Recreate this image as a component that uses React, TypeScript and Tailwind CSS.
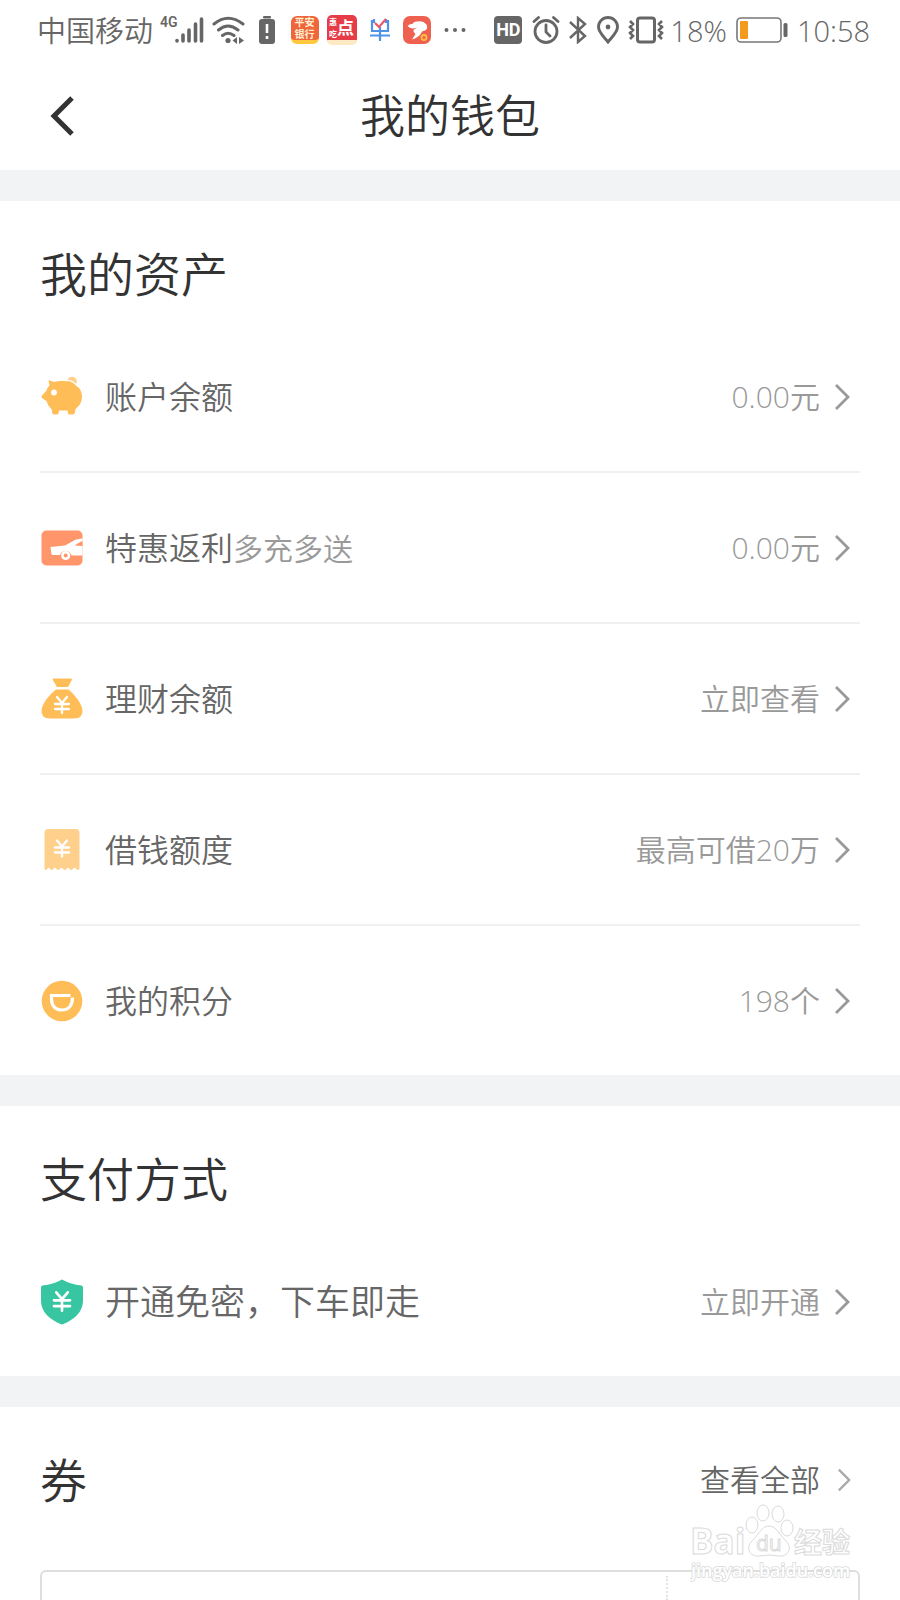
import type { ReactNode } from "react";

const fontStack =
  "font-['Open_Sans','Noto_Sans_CJK_SC',sans-serif] font-[350]";

function Yen({ x, y, s = 1, color = "#fff" }: { x: number; y: number; s?: number; color?: string }) {
  return (
    <g
      transform={`translate(${x} ${y}) scale(${s})`}
      fill="none"
      stroke={color}
      strokeWidth="2.300"
      strokeLinecap="round"
    >
      <path d="M-5 -8L0 -2L5 -8M0 -2V8M-7 -1H7M-7 4H7" />
    </g>
  );
}

function PiggyIcon() {
  return (
    <svg viewBox="0 0 44 44" className="size-11" aria-hidden="true">
      <circle cx="32" cy="6.500" r="4.800" fill="#ffd08c" />
      <path
        d="M8.500 5L14 7C16.500 6.300 19.500 6 22.500 6C34 6 42 12.500 42 21.500C42 27 39.500 31 35.500 34L35 37.500Q34.700 39.500 32.600 39.500H29.400Q28 39.500 27.800 37.500L27.500 35.500H19L18.700 37.500Q18.500 39.500 17 39.500H14Q12.500 39.500 12.200 37.500L11.600 34C9 32 7.500 29 6.500 26L2.500 23.500Q1 22 2 20.500L6.500 15.500C7 13.500 8 12 9.500 10.500Z"
        fill="#ffbd57"
      />
      <path d="M27 5Q34 6 38 12" fill="none" stroke="#fff" strokeWidth="1.200" />
      <circle cx="14" cy="17.500" r="2.900" fill="#fff" />
    </svg>
  );
}

function CarIcon() {
  return (
    <svg viewBox="0 0 44 44" className="size-11" aria-hidden="true">
      <rect x="1.500" y="4.500" width="41" height="35" rx="5" fill="#ff966b" />
      <path
        d="M10.500 21L25 19.500L35 14Q37 13 42.500 12.500V29.500H31.500A6 6 0 0 0 20 29H13Q11.500 29 11.300 27.500Z"
        fill="#fff"
      />
      <path d="M34.500 19.500L41 15.500H42.500V20Z" fill="#ff966b" />
      <circle cx="25.700" cy="29.500" r="4.600" fill="#fff" />
      <circle cx="25.700" cy="29.500" r="2" fill="#ff966b" />
    </svg>
  );
}

function MoneyBagIcon() {
  return (
    <svg viewBox="0 0 44 44" className="size-11" aria-hidden="true">
      <path d="M13.500 1.500H31Q32.500 1.500 31.800 3L28 10H17L12.800 3Q12.200 1.500 13.500 1.500Z" fill="#ffbd57" />
      <path
        d="M16 12.500H28.500C34 17 42.500 27 42.500 34Q42.500 41.500 34 41.500H10Q1.500 41.500 1.500 34C1.500 27 10 17 16 12.500Z"
        fill="#ffbd57"
      />
      <Yen x={22} y={28} />
    </svg>
  );
}

function ReceiptIcon() {
  return (
    <svg viewBox="0 0 44 44" className="size-11" aria-hidden="true">
      <path
        d="M8.500 1H35.500Q39.500 1 39.500 5V41Q37.700 43 36.300 41Q34.600 38.500 32.900 41Q31.300 43 29.700 41Q28 38.500 26.300 41Q24.700 43 23.100 41Q21.500 38.500 19.800 41Q18.200 43 16.600 41Q15 38.500 13.300 41Q11.700 43 10.100 41Q8.500 38.500 7.200 41Q6 43 4.500 41V5Q4.500 1 8.500 1Z"
        fill="#ffd08c"
      />
      <Yen x={22} y={20.5} />
    </svg>
  );
}

function PointsIcon() {
  return (
    <svg viewBox="0 0 44 44" className="size-11" aria-hidden="true">
      <circle cx="22" cy="22" r="20.300" fill="#ffbd57" />
      <path
        d="M30.500 16.500H11.500V20C11.500 27 15.500 31 22 31S32.500 26.500 32.500 18.500"
        fill="none"
        stroke="#fff"
        strokeWidth="3.200"
      />
    </svg>
  );
}

function ShieldIcon() {
  return (
    <svg viewBox="0 0 44 48" className="h-12 w-11" aria-hidden="true">
      <path
        d="M22 1.500Q31 6.500 41.500 7.500Q43 8 43 9.500V23C43 34 34 41.500 23.500 46Q22 46.800 20.500 46C10 41.500 1 34 1 23V9.500Q1 8 2.500 7.500Q13 6.500 22 1.500Z"
        fill="#38c6a2"
      />
      <Yen x={22} y={23.5} s={1.15} />
    </svg>
  );
}

function Chevron({ small = false }: { small?: boolean }) {
  return (
    <svg
      viewBox="0 0 16 28"
      className={small ? "h-6 w-4 text-[#aaa]" : "h-7 w-4 text-[#999]"}
      fill="none"
      stroke="currentColor"
      strokeWidth="2.800"
      aria-hidden="true"
    >
      <path d="M2 2L14 14L2 26" />
    </svg>
  );
}

function StatusBar() {
  return (
    <div className="flex h-[60px] items-center justify-between pr-[30px] pl-[37px] text-[29px] text-[#666]">
      <div className="flex items-center">
        <span className="leading-none">中国移动</span>
        <span className="mb-4 ml-[7px] font-['Roboto'] text-[14px] leading-none font-semibold">4G</span>
        <svg viewBox="0 0 30 28" className="-ml-1 h-7 w-[30px]" stroke="#666" strokeWidth="3.600" strokeLinecap="round" aria-hidden="true">
          <path d="M3 24.500V25M9 19V25M15 14V25M21.500 8V25M27.500 3V25" />
        </svg>
        <svg viewBox="0 0 34 28" className="ml-2 h-7 w-[34px]" fill="none" stroke="#666" strokeWidth="3" strokeLinecap="round" aria-hidden="true">
          <path d="M2 8Q16 -3.500 31 8M6.500 14Q16 6 26 14M10.500 19.500Q16 15 22 19.500" />
          <circle cx="16" cy="24.500" r="2.600" fill="#666" stroke="none" />
          <path d="M25 21V28L20.500 24.500ZM27 21V28L32 24.500Z" fill="#666" stroke="none" />
        </svg>
        <svg viewBox="0 0 16 29" className="ml-[13px] h-[29px] w-4" aria-hidden="true">
          <rect x="4" y="0" width="8" height="2.500" rx="1" fill="#666" />
          <rect x="0" y="3" width="16" height="25" rx="3" fill="#666" />
          <path d="M8 8V17M8 20V23" stroke="#fff" strokeWidth="2.600" />
        </svg>
        <span className="ml-4 flex h-7 w-7 flex-col items-center justify-center overflow-hidden rounded-[6px] border-b-4 border-[#ffc83d] bg-[#f0663c] text-[10px] leading-[12px] font-bold text-[#fff0d0]">
          <span>平安</span>
          <span>银行</span>
        </span>
        <span className="ml-2 flex h-[30px] w-[30px] items-center justify-center overflow-hidden rounded-[5px] border-b-[5px] border-[#fde9c4] bg-[#e63c48] leading-none font-bold text-white">
          <span className="flex flex-col text-[8px] leading-[12px]">
            <span>惠</span>
            <span>吃</span>
          </span>
          <span className="text-[17px]">点</span>
        </span>
        <svg viewBox="0 0 20 24" className="ml-[13px] h-6 w-5" fill="none" strokeWidth="2.200" aria-hidden="true">
          <path d="M5 3H2V13H18V3H15M10 9V23M0 17.500H20M4 1V5M16 1V5" stroke="#4d93e8" />
          <path d="M5 5L9 9L16 1" stroke="#ec5666" />
        </svg>
        <svg viewBox="0 0 28 28" className="ml-[13px] size-7" aria-hidden="true">
          <rect width="28" height="28" rx="7" fill="#ee6050" />
          <path d="M4.500 10Q7 7.500 9.500 8Q10.500 5 15 5.500Q20 4.500 23.500 8.500Q25.500 12.500 22 14.500Q19.500 14.500 18.500 16.500Q16.500 21 9 23.500L12.500 18Q10 16.500 10.500 14L14 11.500Q8 14 4.500 10Z" fill="#fff" />
          <circle cx="21" cy="21.500" r="2.500" fill="none" stroke="#ffbd3d" strokeWidth="1.800" />
        </svg>
        <svg viewBox="0 0 22 6" className="ml-[13px] h-[6px] w-[22px]" fill="#666" aria-hidden="true">
          <circle cx="2.500" cy="3" r="2" /><circle cx="11" cy="3" r="2" /><circle cx="19.500" cy="3" r="2" />
        </svg>
      </div>
      <div className="flex items-center">
        <span className="grid h-7 w-7 place-items-center rounded-[4px] bg-[#666] font-['Roboto'] text-[18px] leading-none font-bold text-white">HD</span>
        <svg viewBox="0 0 28 28" className="ml-[10px] size-7" fill="none" stroke="#666" strokeWidth="2.800" strokeLinecap="round" aria-hidden="true">
          <circle cx="14" cy="15.500" r="11" />
          <path d="M14 9V16L18 20M2 5.500L6.500 1.500M26 5.500L21.500 1.500" />
        </svg>
        <svg viewBox="0 0 18 28" className="ml-[9px] h-7 w-[18px]" fill="none" stroke="#666" strokeWidth="2.400" aria-hidden="true">
          <path d="M1 6L16 20L9 26V2L16 8L1 22" />
        </svg>
        <svg viewBox="0 0 24 28" className="ml-[9px] h-7 w-6" fill="none" stroke="#666" strokeWidth="2.900" aria-hidden="true">
          <path d="M12 26C7 20 2.500 16 2.500 11A9.500 9.500 0 0 1 21.500 11C21.500 16 17 20 12 26Z" />
          <circle cx="12" cy="11" r="2.400" fill="#666" stroke="none" />
        </svg>
        <svg viewBox="0 0 36 28" className="ml-2 h-7 w-9" fill="none" stroke="#666" strokeWidth="3" aria-hidden="true">
          <rect x="9.500" y="2" width="17" height="24" rx="2.500" />
          <path d="M2 5L5 8L2 11L5 14L2 17L5 20L2 23M34 5L31 8L34 11L31 14L34 17L31 20L34 23" strokeWidth="2.600" />
        </svg>
        <span className="ml-[6px] leading-none font-light">18%</span>
        <svg viewBox="0 0 52 26" className="ml-[9px] h-[26px] w-[52px]" aria-hidden="true">
          <rect x="1" y="1" width="44" height="24" rx="4" fill="none" stroke="#777" strokeWidth="1.600" />
          <rect x="4" y="4" width="8" height="18" rx="1" fill="#f39a1f" />
          <rect x="47.500" y="6" width="4" height="14" rx="1.500" fill="#666" />
        </svg>
        <span className="ml-[9px] leading-none font-light">10:58</span>
      </div>
    </div>
  );
}

function Row({ icon, label, note, value, large = false, last = false }: {
  icon: ReactNode;
  label: string;
  note?: string;
  value: string;
  large?: boolean;
  last?: boolean;
}) {
  return (
    <li className={last ? "" : "border-b-2 border-[#f0f0f0]"}>
      <button type="button" className="flex w-full items-center py-[50px] pr-[10px] text-left">
        {icon}
        <span className={large ? "ml-[21px] text-[35px] leading-[49px] text-[#666]" : "ml-[21px] text-[32px] leading-[49px] text-[#666]"}>
          {label}
          {note && <span className="text-[30px] leading-none text-[#999]">{note}</span>}
        </span>
        <span className="mr-[14px] ml-auto text-[30px] leading-[49px] text-[#999]">{value}</span>
        <Chevron />
      </button>
    </li>
  );
}

function SectionTitle({ children }: { children: ReactNode }) {
  return <h2 className="pt-10 pb-[15px] text-[47px] leading-[66px] text-[#333]">{children}</h2>;
}

function Watermark() {
  return (
    <svg viewBox="0 0 164 80" className="pointer-events-none absolute top-[97px] right-[46px] h-20 w-[164px]" fill="#fff" stroke="#dadada" strokeWidth="1" aria-hidden="true">
      <g fontFamily="'Open Sans','Noto Sans CJK SC',sans-serif" fontWeight="700">
        <text x="0" y="50" fontSize="35">Bai</text>
        <text x="104" y="49" fontSize="28">经验</text>
        <ellipse cx="62" cy="21" rx="6" ry="8" />
        <ellipse cx="73" cy="9" rx="6" ry="8" />
        <ellipse cx="88" cy="10" rx="6" ry="8" />
        <ellipse cx="97" cy="24" rx="6" ry="8" />
        <path d="M79 22C87 22 90 32 96 37C103 44 98 53 89 52Q79 50 69 52C60 53 55 44 62 37C68 32 71 22 79 22Z" />
        <text x="66" y="47" fontSize="21" fontWeight="400">du</text>
        <text x="1" y="73" fontSize="18" fontWeight="600" strokeWidth="1.600" paintOrder="stroke">jingyan.baidu.com</text>
      </g>
    </svg>
  );
}

export default function App() {
  return (
    <div className={`flex min-h-screen flex-col overflow-hidden bg-white ${fontStack}`}>
      <StatusBar />
      <header className="grid grid-cols-[1fr_auto_1fr] items-center pt-6 pb-[22px]">
        <button type="button" aria-label="返回" className="ml-[50px] w-6">
          <svg viewBox="0 0 24 40" className="h-10 w-6" fill="none" stroke="#333" strokeWidth="5" aria-hidden="true">
            <path d="M22 2L4 20L22 38" />
          </svg>
        </button>
        <h1 className="text-[45px] leading-[64px] text-[#333]">我的钱包</h1>
      </header>
      <main className="flex grow flex-col">
        <section className="border-t-[31px] border-[#f1f3f5] px-10">
          <SectionTitle>我的资产</SectionTitle>
          <ul>
            <Row icon={<PiggyIcon />} label="账户余额" value="0.00元" />
            <Row icon={<CarIcon />} label="特惠返利" note="多充多送" value="0.00元" />
            <Row icon={<MoneyBagIcon />} label="理财余额" value="立即查看" />
            <Row icon={<ReceiptIcon />} label="借钱额度" value="最高可借20万" />
            <Row icon={<PointsIcon />} label="我的积分" value="198个" last />
          </ul>
        </section>
        <section className="border-t-[31px] border-[#f1f3f5] px-10">
          <SectionTitle>支付方式</SectionTitle>
          <ul>
            <Row icon={<ShieldIcon />} label="开通免密，下车即走" value="立即开通" large last />
          </ul>
        </section>
        <section className="relative flex grow flex-col border-t-[31px] border-[#f1f3f5] px-10">
          <div className="flex items-center justify-between pb-[42px]">
            <SectionTitle>券</SectionTitle>
            <a href="#coupons" className="flex items-center gap-4 pt-6 pr-2 text-[30px] leading-[49px] text-[#666]">
              查看全部
              <Chevron small />
            </a>
          </div>
          <div className="flex min-h-[29px] grow rounded-t-md border-2 border-b-0 border-[#dedede]">
            <div className="mt-1 mr-[190px] grow border-r-2 border-dotted border-[#e4e4e4]" />
          </div>
          <Watermark />
        </section>
      </main>
    </div>
  );
}
